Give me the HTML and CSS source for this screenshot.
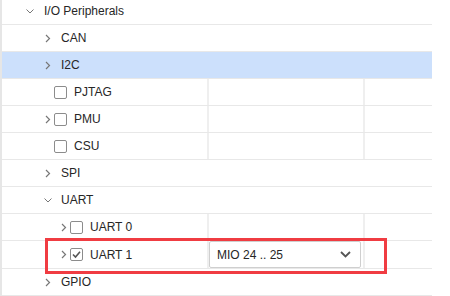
FILE: index.html
```html
<!DOCTYPE html>
<html>
<head>
<meta charset="utf-8">
<link rel="stylesheet" href="styles.css">
</head>
<body>
<div class="tree">
  <div class="row lvl0">
    <div class="cell first">
      <span class="tog"><svg width="8" height="5" viewBox="0 0 8 5"><path d="M0.5 0.5 L4 4 L7.5 0.5" fill="none" stroke="#777" stroke-width="1"/></svg></span>
      <span class="label">I/O Peripherals</span>
    </div>
  </div>
  <div class="row lvl1">
    <div class="cell first">
      <span class="tog"><svg width="6" height="9" viewBox="0 0 6 9"><path d="M1 1 L4.5 4.5 L1 8" fill="none" stroke="#777" stroke-width="1.2"/></svg></span>
      <span class="label">CAN</span>
    </div>
  </div>
  <div class="row lvl1 selected">
    <div class="cell first">
      <span class="tog"><svg width="6" height="9" viewBox="0 0 6 9"><path d="M1 1 L4.5 4.5 L1 8" fill="none" stroke="#777" stroke-width="1.2"/></svg></span>
      <span class="label">I2C</span>
    </div>
  </div>
  <div class="row lvl1 cols">
    <div class="cell first">
      <span class="tog"></span>
      <span class="cb"></span>
      <span class="label">PJTAG</span>
    </div>
    <div class="cell"></div>
    <div class="cell"></div>
  </div>
  <div class="row lvl1 cols">
    <div class="cell first">
      <span class="tog"><svg width="6" height="9" viewBox="0 0 6 9"><path d="M1 1 L4.5 4.5 L1 8" fill="none" stroke="#777" stroke-width="1.2"/></svg></span>
      <span class="cb"></span>
      <span class="label">PMU</span>
    </div>
    <div class="cell"></div>
    <div class="cell"></div>
  </div>
  <div class="row lvl1 cols">
    <div class="cell first">
      <span class="tog"></span>
      <span class="cb"></span>
      <span class="label">CSU</span>
    </div>
    <div class="cell"></div>
    <div class="cell"></div>
  </div>
  <div class="row lvl1">
    <div class="cell first">
      <span class="tog"><svg width="6" height="9" viewBox="0 0 6 9"><path d="M1 1 L4.5 4.5 L1 8" fill="none" stroke="#777" stroke-width="1.2"/></svg></span>
      <span class="label">SPI</span>
    </div>
  </div>
  <div class="row lvl1">
    <div class="cell first">
      <span class="tog"><svg width="8" height="5" viewBox="0 0 8 5"><path d="M0.5 0.5 L4 4 L7.5 0.5" fill="none" stroke="#777" stroke-width="1"/></svg></span>
      <span class="label">UART</span>
    </div>
  </div>
  <div class="row lvl2 cols">
    <div class="cell first">
      <span class="tog"><svg width="6" height="9" viewBox="0 0 6 9"><path d="M1 1 L4.5 4.5 L1 8" fill="none" stroke="#777" stroke-width="1.2"/></svg></span>
      <span class="cb"></span>
      <span class="label">UART 0</span>
    </div>
    <div class="cell"></div>
    <div class="cell"></div>
  </div>
  <div class="row lvl2 cols tall">
    <div class="cell first">
      <span class="tog"><svg width="6" height="9" viewBox="0 0 6 9"><path d="M1 1 L4.5 4.5 L1 8" fill="none" stroke="#777" stroke-width="1.2"/></svg></span>
      <span class="cb checked"><svg width="11" height="11" viewBox="0 0 11 11"><path d="M2 5.5 L4.5 8 L9 2.8" fill="none" stroke="#555" stroke-width="1.6"/></svg></span>
      <span class="label">UART 1</span>
    </div>
    <div class="cell">
      <div class="select">
        <span>MIO 24 .. 25</span>
        <svg width="11" height="7" viewBox="0 0 11 7"><path d="M1 1 L5.5 5.5 L10 1" fill="none" stroke="#555" stroke-width="1.8"/></svg>
      </div>
    </div>
    <div class="cell"></div>
    <div class="highlight-box"></div>
  </div>
  <div class="row lvl1">
    <div class="cell first">
      <span class="tog"><svg width="6" height="9" viewBox="0 0 6 9"><path d="M1 1 L4.5 4.5 L1 8" fill="none" stroke="#777" stroke-width="1.2"/></svg></span>
      <span class="label">GPIO</span>
    </div>
  </div>
</div>
</body>
</html>
```

FILE: styles.css
```css
html, body {
  margin: 0;
  padding: 0;
  background: #fff;
  overflow: hidden;
}

body {
  font-family: "Liberation Sans", Arial, sans-serif;
  font-size: 12px;
  color: #262626;
}

.tree {
  margin-top: -2px;
  width: 430px;
  height: 298px;
  overflow: hidden;
  border-left: 2px solid #e6e6e6;
}

.row {
  position: relative;
  display: grid;
  grid-template-columns: 430px;
  height: 27px;
  box-sizing: border-box;
  border-bottom: 1px solid #e8e8e8;
}

.row.cols {
  grid-template-columns: 205px 156px 69px;
}

.row.tall {
  height: 28px;
}

.row.selected {
  background: #cce0fc;
}

.cell {
  display: flex;
  align-items: center;
  box-sizing: border-box;
  min-width: 0;
}

.cols .cell + .cell {
  border-left: 2px solid #efefef;
}

.lvl0 .first { padding-left: 21px; }
.lvl1 .first { padding-left: 40px; }
.lvl2 .first { padding-left: 56px; }

.tog {
  width: 12px;
  height: 12px;
  display: flex;
  align-items: center;
  justify-content: center;
  flex: none;
}

.lvl0 .tog { width: 14px; }

.label {
  margin-left: 7px;
  white-space: nowrap;
}

.cb {
  width: 13px;
  height: 13px;
  box-sizing: border-box;
  border: 1px solid #8c8c8c;
  border-radius: 2px;
  background: #fff;
  flex: none;
  display: flex;
  align-items: center;
  justify-content: center;
}

.select {
  flex: 1;
  height: 27px;
  margin-right: 2px;
  box-sizing: border-box;
  border: 1px solid #cfcfcf;
  border-radius: 2px;
  display: flex;
  align-items: center;
  justify-content: space-between;
  padding: 0 9px 0 7px;
  color: #262626;
  background: #fff;
}

.highlight-box {
  position: absolute;
  left: 43px;
  top: -3px;
  width: 342px;
  height: 36px;
  box-sizing: border-box;
  border: 3px solid #f03c42;
  pointer-events: none;
}
```
